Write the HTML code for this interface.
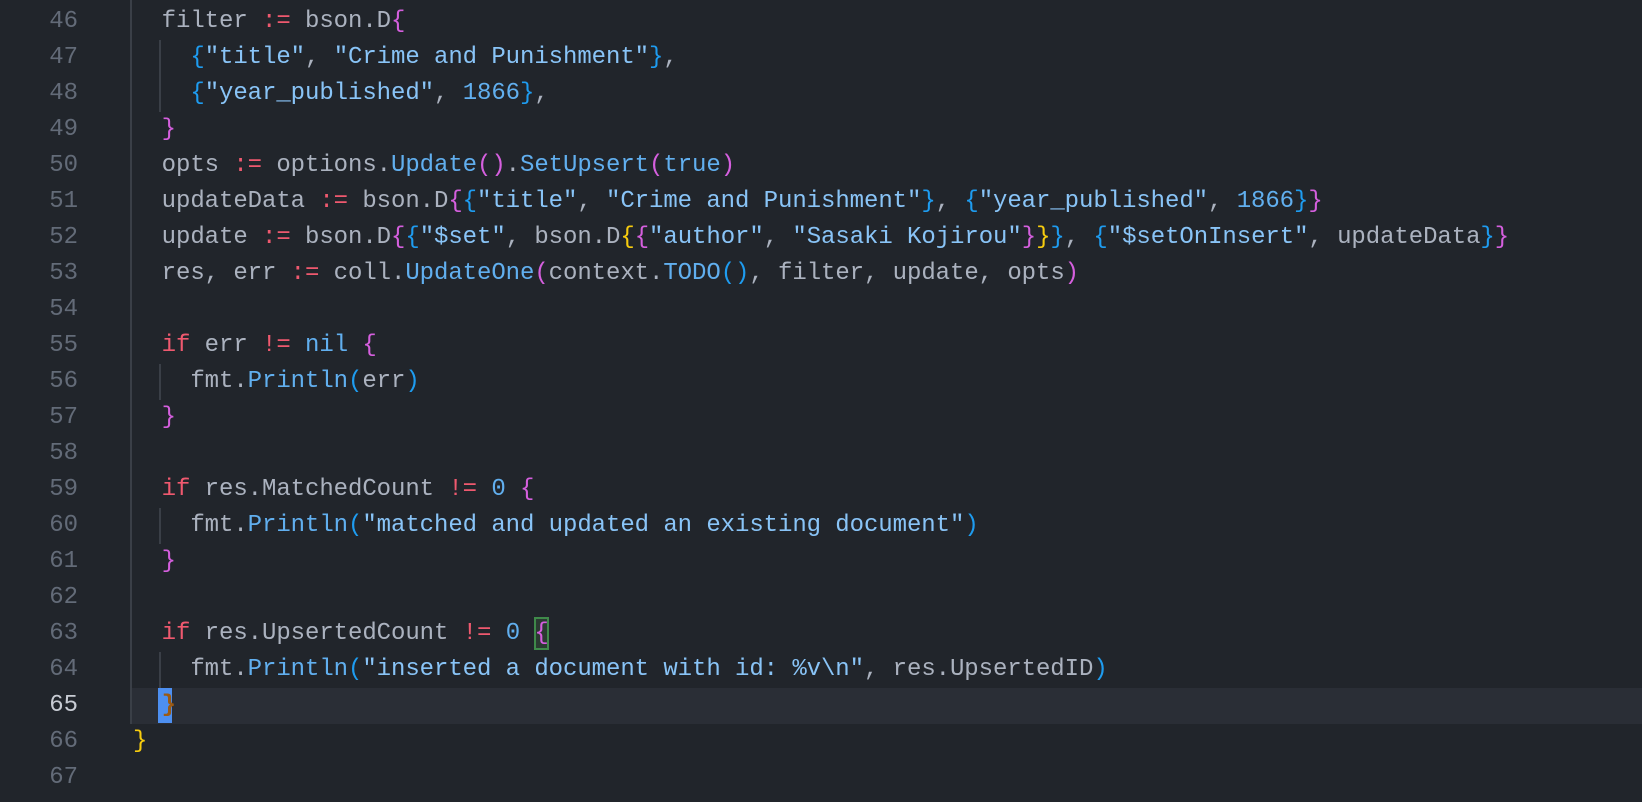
<!DOCTYPE html>
<html><head><meta charset="utf-8"><style>
body{margin:0;background:#21252b;width:1642px;height:802px;overflow:hidden;position:relative;font-family:"Liberation Mono",monospace;font-size:24px;}
.ln{position:absolute;left:0;width:78px;text-align:right;color:#636b78;height:36px;line-height:36px;}
.c{position:absolute;left:133px;height:36px;line-height:36px;white-space:pre;color:#abb2bf;letter-spacing:-0.07px;}
.k{color:#ef596f}.f{color:#61afef}.s{color:#89c4f7}.n{color:#61afef}
.p{color:#d55fde}.b{color:#1e9cf0}.y{color:#f7cc0e}
.g{position:absolute;width:2px;background:#3a3f47;}
</style></head><body>
<div style="position:absolute;left:131px;top:688px;width:1511px;height:36px;background:#2a2e36"></div>
<div class="g" style="left:130px;top:0;height:724px"></div>
<div class="g" style="left:159px;top:40px;height:72px"></div>
<div class="g" style="left:159px;top:364px;height:36px"></div>
<div class="g" style="left:159px;top:508px;height:36px"></div>
<div class="g" style="left:159px;top:652px;height:36px"></div>
<div style="position:absolute;left:158px;top:688px;width:14px;height:35px;background:#4d8ff0"></div>
<div style="position:absolute;left:534px;top:617px;width:15px;height:33px;border:2px solid #3f8a4a;box-sizing:border-box;background:#2b3a32"></div>
<div class="ln" style="top:4px">46</div><div class="c" style="top:4px">  filter <span class="k">:=</span> bson.D<span class="p">{</span></div>
<div class="ln" style="top:40px">47</div><div class="c" style="top:40px">    <span class="b">{</span><span class="s">"title"</span>, <span class="s">"Crime and Punishment"</span><span class="b">}</span>,</div>
<div class="ln" style="top:76px">48</div><div class="c" style="top:76px">    <span class="b">{</span><span class="s">"year_published"</span>, <span class="n">1866</span><span class="b">}</span>,</div>
<div class="ln" style="top:112px">49</div><div class="c" style="top:112px">  <span class="p">}</span></div>
<div class="ln" style="top:148px">50</div><div class="c" style="top:148px">  opts <span class="k">:=</span> options.<span class="f">Update</span><span class="p">()</span>.<span class="f">SetUpsert</span><span class="p">(</span><span class="n">true</span><span class="p">)</span></div>
<div class="ln" style="top:184px">51</div><div class="c" style="top:184px">  updateData <span class="k">:=</span> bson.D<span class="p">{</span><span class="b">{</span><span class="s">"title"</span>, <span class="s">"Crime and Punishment"</span><span class="b">}</span>, <span class="b">{</span><span class="s">"year_published"</span>, <span class="n">1866</span><span class="b">}</span><span class="p">}</span></div>
<div class="ln" style="top:220px">52</div><div class="c" style="top:220px">  update <span class="k">:=</span> bson.D<span class="p">{</span><span class="b">{</span><span class="s">"$set"</span>, bson.D<span class="y">{</span><span class="p">{</span><span class="s">"author"</span>, <span class="s">"Sasaki Kojirou"</span><span class="p">}</span><span class="y">}</span><span class="b">}</span>, <span class="b">{</span><span class="s">"$setOnInsert"</span>, updateData<span class="b">}</span><span class="p">}</span></div>
<div class="ln" style="top:256px">53</div><div class="c" style="top:256px">  res, err <span class="k">:=</span> coll.<span class="f">UpdateOne</span><span class="p">(</span>context.<span class="f">TODO</span><span class="b">()</span>, filter, update, opts<span class="p">)</span></div>
<div class="ln" style="top:292px">54</div>
<div class="ln" style="top:328px">55</div><div class="c" style="top:328px">  <span class="k">if</span> err <span class="k">!=</span> <span class="n">nil</span> <span class="p">{</span></div>
<div class="ln" style="top:364px">56</div><div class="c" style="top:364px">    fmt.<span class="f">Println</span><span class="b">(</span>err<span class="b">)</span></div>
<div class="ln" style="top:400px">57</div><div class="c" style="top:400px">  <span class="p">}</span></div>
<div class="ln" style="top:436px">58</div>
<div class="ln" style="top:472px">59</div><div class="c" style="top:472px">  <span class="k">if</span> res.MatchedCount <span class="k">!=</span> <span class="n">0</span> <span class="p">{</span></div>
<div class="ln" style="top:508px">60</div><div class="c" style="top:508px">    fmt.<span class="f">Println</span><span class="b">(</span><span class="s">"matched and updated an existing document"</span><span class="b">)</span></div>
<div class="ln" style="top:544px">61</div><div class="c" style="top:544px">  <span class="p">}</span></div>
<div class="ln" style="top:580px">62</div>
<div class="ln" style="top:616px">63</div><div class="c" style="top:616px">  <span class="k">if</span> res.UpsertedCount <span class="k">!=</span> <span class="n">0</span> <span class="p">{</span></div>
<div class="ln" style="top:652px">64</div><div class="c" style="top:652px">    fmt.<span class="f">Println</span><span class="b">(</span><span class="s">"inserted a document with id: %v\n"</span>, res.UpsertedID<span class="b">)</span></div>
<div class="ln" style="top:688px;color:#c8ccd4">65</div><div class="c" style="top:688px">  <span style="color:#9a5a14;font-weight:bold">}</span></div>
<div class="ln" style="top:724px">66</div><div class="c" style="top:724px"><span class="y">}</span></div>
<div class="ln" style="top:760px">67</div>
</body></html>
